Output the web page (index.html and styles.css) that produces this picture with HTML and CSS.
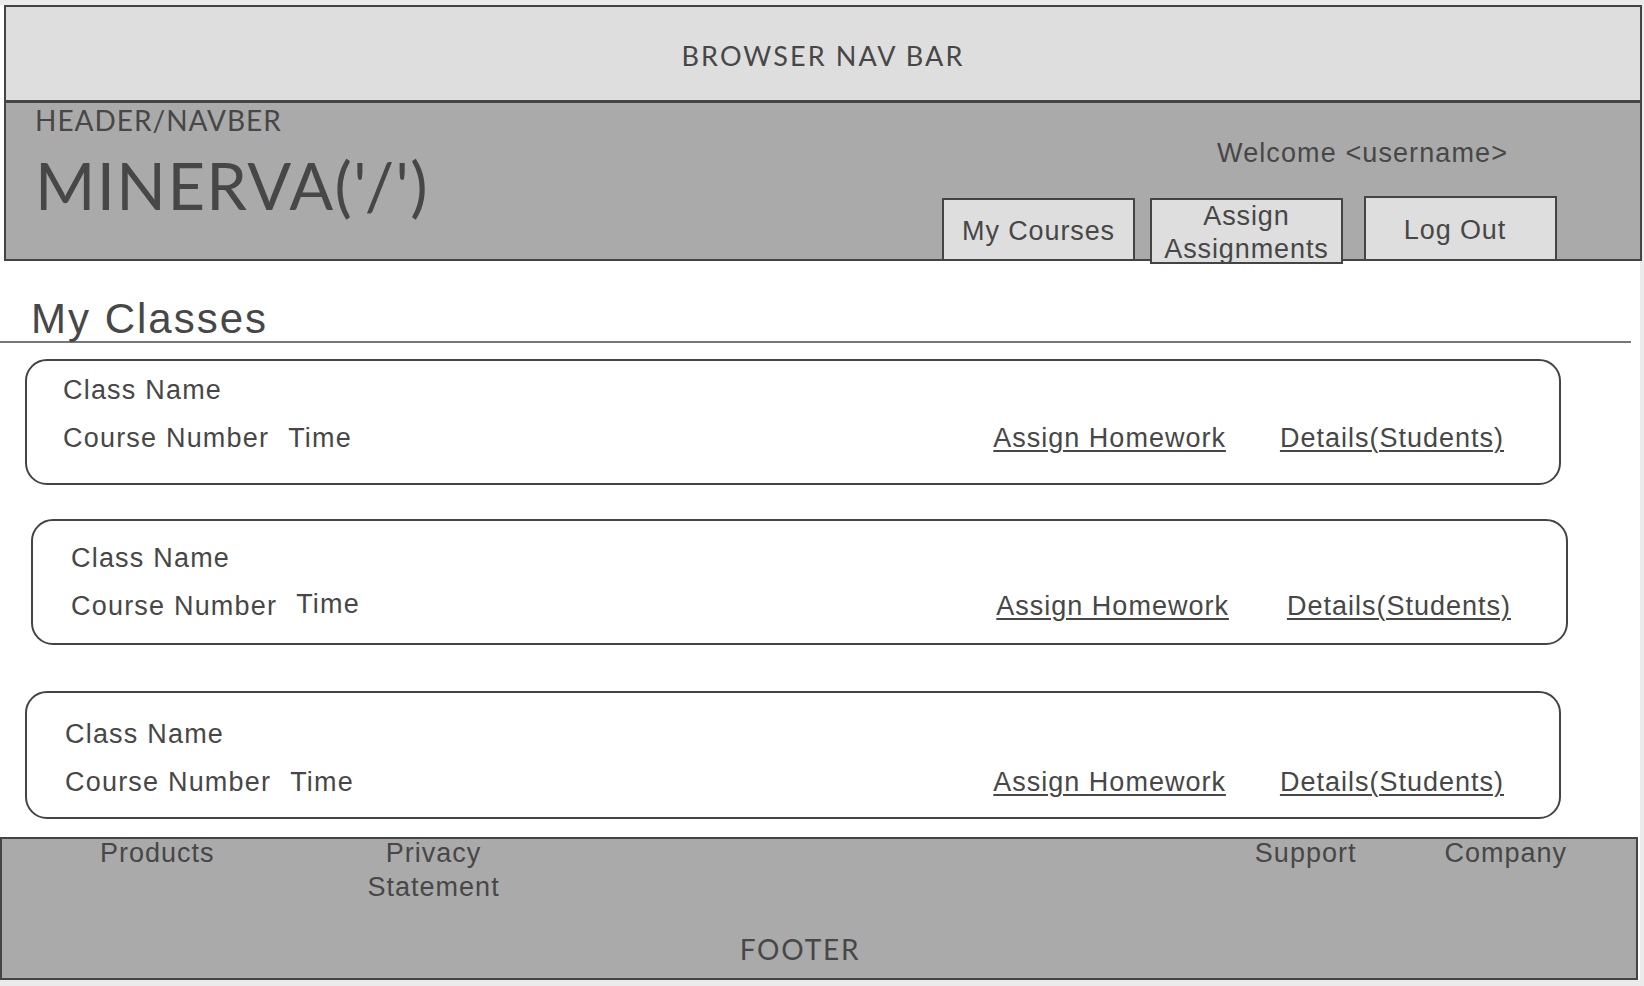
FILE: index.html
```html
<!DOCTYPE html>
<html lang="en">
<head>
<meta charset="utf-8">
<title>Minerva wireframe</title>
<link rel="stylesheet" href="styles.css">
</head>
<body>
<div class="page">
  <div class="browser-bar">BROWSER NAV BAR</div>
  <header class="header">
    <div class="brand">
      <div class="brand-label">HEADER/NAVBER</div>
      <div class="brand-name">MINERVA('/')</div>
    </div>
    <div class="header-right">
      <div class="welcome">Welcome &lt;username&gt;</div>
      <nav class="nav-buttons">
        <div class="nav-btn nav-btn--courses">My Courses</div>
        <div class="nav-btn nav-btn--assign">Assign<br>Assignments</div>
        <div class="nav-btn nav-btn--logout">Log Out</div>
      </nav>
    </div>
  </header>

  <h1 class="section-title">My Classes</h1>

  <div class="card card--first">
    <div class="card-title">Class Name</div>
    <div class="card-row">
      <span class="card-meta">Course Number</span>
      <span class="card-meta">Time</span>
      <div class="card-links">
        <a class="card-link" href="#">Assign Homework</a>
        <a class="card-link" href="#">Details(Students)</a>
      </div>
    </div>
  </div>

  <div class="card card--second">
    <div class="card-title">Class Name</div>
    <div class="card-row">
      <span class="card-meta">Course Number</span>
      <span class="card-meta card-meta--raised">Time</span>
      <div class="card-links card-links--wide">
        <a class="card-link" href="#">Assign Homework</a>
        <a class="card-link" href="#">Details(Students)</a>
      </div>
    </div>
  </div>

  <div class="card card--third">
    <div class="card-title">Class Name</div>
    <div class="card-row">
      <span class="card-meta">Course Number</span>
      <span class="card-meta">Time</span>
      <div class="card-links">
        <a class="card-link" href="#">Assign Homework</a>
        <a class="card-link" href="#">Details(Students)</a>
      </div>
    </div>
  </div>

  <footer class="footer">
    <div class="footer-links">
      <div class="footer-group">
        <span class="footer-link">Products</span>
        <span class="footer-link footer-link--center">Privacy<br>Statement</span>
      </div>
      <div class="footer-group footer-group--right">
        <span class="footer-link">Support</span>
        <span class="footer-link">Company</span>
      </div>
    </div>
    <div class="footer-label">FOOTER</div>
  </footer>
</div>
</body>
</html>
```

FILE: styles.css
```css
* {
  box-sizing: border-box;
}

html, body {
  margin: 0;
  padding: 0;
}

body {
  background: #ebebeb;
  color: #474747;
  font-family: "Liberation Sans", Arial, sans-serif;
}

.page {
  margin-top: 5px;
  width: 1640px;
  height: 975px;
  background: #ffffff;
}

/* Browser bar */
.browser-bar {
  margin-left: 4px;
  width: 1638px;
  height: 98px;
  border: 2px solid #444;
  border-bottom-width: 3px;
  background: #dedede;
  display: flex;
  align-items: center;
  justify-content: center;
  padding-top: 4px;
  font-family: Lato, "Liberation Sans", sans-serif;
  font-size: 27px;
  letter-spacing: 2.1px;
}

/* Header */
.header {
  margin-left: 4px;
  width: 1638px;
  height: 158px;
  border: 2px solid #444;
  border-top: none;
  background: #aaaaaa;
  display: flex;
  justify-content: space-between;
  padding-left: 29px;
  padding-right: 83px;
}

.brand {
  display: flex;
  flex-direction: column;
  font-family: Lato, "Liberation Sans", sans-serif;
}

.brand-label {
  margin-top: 1px;
  font-size: 28px;
  line-height: 1.2;
  letter-spacing: 1px;
}

.brand-name {
  margin-top: 8px;
  font-size: 65px;
  line-height: 1.2;
  letter-spacing: 1.4px;
}

.header-right {
  display: flex;
  flex-direction: column;
  align-items: flex-end;
  justify-content: space-between;
}

.welcome {
  margin-top: 34px;
  margin-right: 49px;
  font-size: 27px;
  line-height: 32px;
  letter-spacing: 1.1px;
}

.nav-buttons {
  display: flex;
  align-items: flex-end;
  margin-bottom: -2px;
}

.nav-btn {
  width: 193px;
  border: 2px solid #444;
  background: #dedede;
  display: flex;
  align-items: center;
  justify-content: center;
  padding-top: 3px;
  text-align: center;
  font-size: 27px;
  line-height: 33px;
  letter-spacing: 0.9px;
}

.nav-btn--courses {
  height: 63px;
}

.nav-btn--assign {
  height: 66px;
  margin-left: 15px;
  margin-bottom: -3px;
}

.nav-btn--logout {
  height: 65px;
  margin-left: 21px;
  padding-right: 11px;
}

/* Section title */
.section-title {
  margin: 34px 0 0 0;
  width: 1631px;
  height: 48px;
  padding-top: 1px;
  padding-left: 31px;
  border-bottom: 2px solid #777;
  font-size: 42px;
  font-weight: normal;
  line-height: 46px;
  letter-spacing: 2px;
}

/* Cards */
.card {
  width: 1536px;
  height: 126px;
  margin-left: 25px;
  border: 2px solid #444;
  border-radius: 22px;
  padding-left: 36px;
  padding-right: 55px;
  display: flex;
  flex-direction: column;
  gap: 16px;
  font-size: 27px;
  line-height: 32px;
  letter-spacing: 1.2px;
}

.card--first {
  margin-top: 16px;
  padding-top: 13px;
}

.card--second {
  margin-top: 34px;
  margin-left: 31px;
  width: 1537px;
  padding-top: 21px;
  padding-left: 38px;
}

.card--third {
  margin-top: 46px;
  height: 128px;
  padding-top: 25px;
  padding-left: 38px;
}

.card-row {
  display: flex;
  align-items: baseline;
  gap: 19px;
}

.card-meta--raised {
  position: relative;
  top: -2px;
}

.card-links {
  margin-left: auto;
  display: flex;
  gap: 54px;
  letter-spacing: 1px;
}

.card-links--wide {
  gap: 58px;
}

.card-link {
  color: #474747;
  text-decoration: underline;
  text-decoration-thickness: 2px;
  text-underline-offset: 3px;
}

/* Footer */
.footer {
  margin-top: 18px;
  width: 1638px;
  height: 143px;
  border: 2px solid #444;
  background: #aaaaaa;
  display: flex;
  flex-direction: column;
}

.footer-links {
  display: flex;
  justify-content: space-between;
  margin-top: -3px;
  padding-left: 98px;
  padding-right: 69px;
  font-size: 27px;
  line-height: 34px;
  letter-spacing: 1px;
}

.footer-group {
  display: flex;
  align-items: flex-start;
  gap: 153px;
}

.footer-group--right {
  gap: 88px;
}

.footer-link--center {
  text-align: center;
}

.footer-label {
  margin-top: auto;
  padding-bottom: 11px;
  padding-right: 38px;
  text-align: center;
  font-family: Lato, "Liberation Sans", sans-serif;
  font-size: 28px;
  line-height: 1.2;
  letter-spacing: 1.8px;
}
```
